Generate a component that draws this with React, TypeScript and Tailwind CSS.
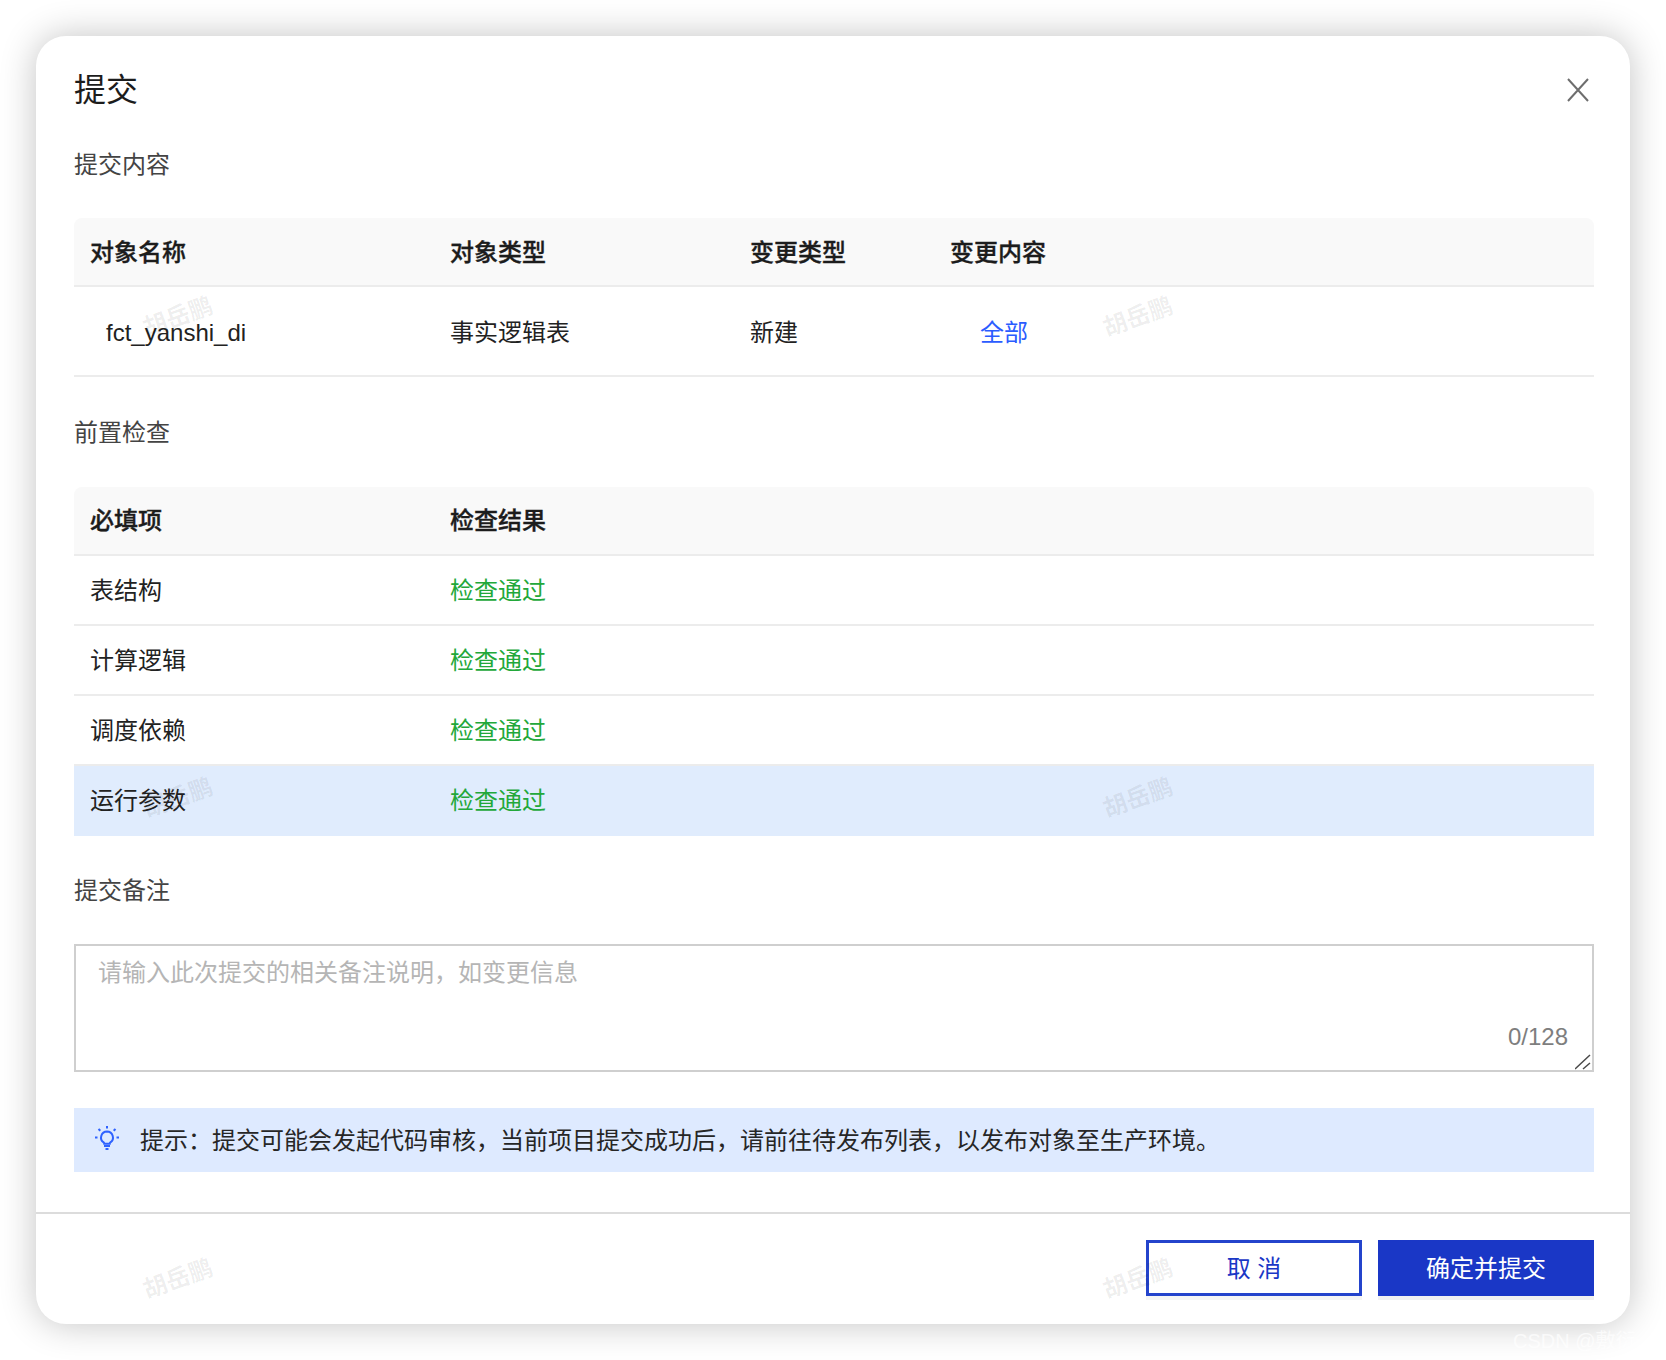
const strongMarks = [
  [142, 281], [1102, 281], [142, 762], [1102, 762], [142, 1243], [1102, 1243],
];

const faintXs = [-15, 184, 383, 582, 781, 980, 1179, 1378, 1577];
const faintYs = [2, 201, 401, 600, 800, 999, 1199];

function Watermarks() {
  return (
    <div className="absolute inset-0 rounded-[30px] pointer-events-none overflow-hidden">
      {faintYs.map((y) =>
        faintXs.map((x) => (
          <span
            key={`${x}-${y}`}
            className="absolute text-[24px] leading-none text-black/[0.018] font-semibold -rotate-[20deg] -translate-x-1/2 -translate-y-1/2 whitespace-nowrap"
            style={{ left: x, top: y }}
          >
            胡岳鹏
          </span>
        )),
      )}
      {strongMarks.map(([x, y]) => (
        <span
          key={`${x}-${y}`}
          className="absolute text-[24px] leading-none text-black/[0.07] font-semibold -rotate-[20deg] -translate-x-1/2 -translate-y-1/2 whitespace-nowrap"
          style={{ left: x, top: y }}
        >
          胡岳鹏
        </span>
      ))}
    </div>
  );
}

function SectionLabel({ children }: { children: string }) {
  return <div className="h-9 leading-9 pt-[1px] text-2xl text-[#444]">{children}</div>;
}

const checks = ["表结构", "计算逻辑", "调度依赖", "运行参数"];

function BulbIcon() {
  return (
    <svg width="24" height="24" viewBox="0 0 24 24" fill="none" stroke="#2f62ff" strokeWidth="2" className="-mt-[6px] shrink-0">
      <path d="M12 5.500a6 6 0 0 0-3.400 10.900c.5.400.7.800.7 1.300h5.400c0-.5.200-.9.700-1.300A6 6 0 0 0 12 5.500z" />
      <path d="M9 20h6M10.500 23h3" />
      <path d="M12 0v2.500M3.500 3l1.800 1.800M20.500 3l-1.800 1.800M0 11.500h2.500M21.500 11.500H24" />
    </svg>
  );
}

export default function App() {
  return (
    <div className="relative w-[1666px] h-[1360px] bg-white p-9 overflow-hidden font-['Liberation_Sans','Noto_Sans_CJK_SC',sans-serif]">
      <div className="relative w-[1594px] h-[1288px] bg-white rounded-[30px] shadow-[0_0_36px_rgba(0,0,0,0.24)] flex flex-col">
        <div className="flex justify-between items-center pl-[38px] pr-[41px] pt-[31px]">
          <h2 className="text-[32px] leading-[46px] text-[#1c1c1c]">提交</h2>
          <svg width="22" height="24" viewBox="0 0 22 24" fill="none" stroke="#6e6e6e" strokeWidth="2">
            <path d="M1 1l20 22M21 1L1 23" />
          </svg>
        </div>

        <div className="pl-[38px] pr-[36px] flex flex-col">
          <div className="mt-[33px]">
            <SectionLabel>提交内容</SectionLabel>
          </div>

          <div className="mt-[36px] text-2xl text-[#222]">
            <div className="flex items-center h-[69px] pt-[2px] bg-[#f9f9f9] border-b-2 border-[#ececec] rounded-t-lg font-medium [-webkit-text-stroke:0.35px_#1c1c1c] text-[#1c1c1c]">
              <div className="w-[360px] pl-4">对象名称</div>
              <div className="w-[300px] pl-4">对象类型</div>
              <div className="w-[200px] pl-4">变更类型</div>
              <div className="pl-4">变更内容</div>
            </div>
            <div className="flex items-center h-[90px] pt-[4px] border-b-2 border-[#ececec]">
              <div className="w-[360px] pl-8">fct_yanshi_di</div>
              <div className="w-[300px] pl-4">事实逻辑表</div>
              <div className="w-[200px] pl-4">新建</div>
              <div className="pl-[46px] text-[#2b5cff]">全部</div>
            </div>
          </div>

          <div className="mt-[37px]">
            <SectionLabel>前置检查</SectionLabel>
          </div>

          <div className="mt-[37px] text-2xl text-[#222]">
            <div className="flex items-center h-[69px] pt-[1px] bg-[#f9f9f9] border-b-2 border-[#ececec] rounded-t-lg font-medium [-webkit-text-stroke:0.35px_#1c1c1c] text-[#1c1c1c]">
              <div className="w-[360px] pl-4">必填项</div>
              <div className="pl-4">检查结果</div>
            </div>
            {checks.map((name, i) => (
              <div
                key={name}
                className={
                  i === checks.length - 1
                    ? "flex items-center h-[70px] bg-[#e0ecfd]"
                    : "flex items-center h-[70px] pt-[2px] border-b-2 border-[#ececec]"
                }
              >
                <div className="w-[360px] pl-4">{name}</div>
                <div className="pl-4 text-[#22a83a]">检查通过</div>
              </div>
            ))}
          </div>

          <div className="mt-[36px]">
            <SectionLabel>提交备注</SectionLabel>
          </div>

          <div className="relative mt-[36px] h-[128px]">
            <textarea
              className="block w-full h-full resize-none border-2 border-[#cfcfcf] bg-transparent px-[22px] py-[9px] text-2xl leading-9 text-[#222] placeholder:text-[#b5b5b5] outline-none"
              placeholder="请输入此次提交的相关备注说明，如变更信息"
            />
            <span className="absolute right-[26px] bottom-[21px] text-2xl leading-7 text-[#7e7e7e]">0/128</span>
            <svg width="16" height="16" viewBox="0 0 16 16" fill="none" stroke="#4a4a4a" strokeWidth="1.500" className="absolute right-[3px] bottom-[2px]">
              <path d="M0 15L15 1M8 15l7-6" />
            </svg>
          </div>

          <div className="mt-[36px] h-[64px] pt-[1px] bg-[#deeaff] flex items-center pl-[21px] gap-[21px] text-2xl text-[#262626]">
            <BulbIcon />
            <span className="pt-[1px]">提示：提交可能会发起代码审核，当前项目提交成功后，请前往待发布列表，以发布对象至生产环境。</span>
          </div>
        </div>

        <div className="mt-[40px] border-t-2 border-[#dcdcdc] px-[36px] pt-[26px] flex justify-end gap-4">
          <button className="w-[216px] h-[56px] pt-[2px] border-[3px] border-[#2444cc] text-2xl text-[#1a37c6] shadow-[0_4px_0_#f5f5f5]">
            取 消
          </button>
          <button className="w-[216px] h-[56px] pt-[2px] bg-[#1a37c6] text-2xl text-white shadow-[0_4px_0_#f1f1f1]">
            确定并提交
          </button>
        </div>

        <Watermarks />
      </div>

      <span className="absolute left-[1513px] top-[1329px] text-[20px] leading-6 text-white/70 whitespace-nowrap">
        CSDN @敷衍一下
      </span>
    </div>
  );
}
